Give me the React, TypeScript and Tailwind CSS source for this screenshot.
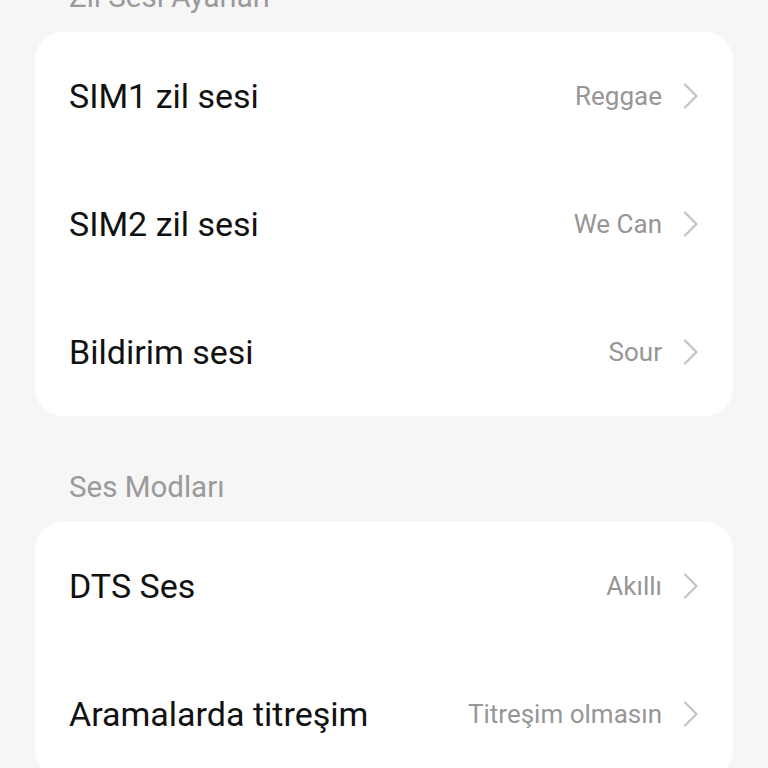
import React from 'react';

type Row = { title: string; value: string };

const ringRows: Row[] = [
  { title: 'SIM1 zil sesi', value: 'Reggae' },
  { title: 'SIM2 zil sesi', value: 'We Can' },
  { title: 'Bildirim sesi', value: 'Sour' },
];

const modeRows: Row[] = [
  { title: 'DTS Ses', value: 'Akıllı' },
  { title: 'Aramalarda titreşim', value: 'Titreşim olmasın' },
];

const Chevron: React.FC = () => (
  <svg width="16" height="26" viewBox="0 0 16 26" fill="none" className="shrink-0">
    <path d="M2 1.5 L13.5 13 L2 24.5" stroke="#c4c4c4" strokeWidth="2.2" strokeLinecap="round" strokeLinejoin="round" />
  </svg>
);

const SettingRow: React.FC<{ row: Row }> = ({ row }) => (
  <div className="flex h-[128px] items-center justify-between pl-[34px] pr-[34px]">
    <span className="text-[34px] leading-none text-[#111111]">{row.title}</span>
    <div className="flex items-center gap-[21px]">
      <span className="text-[26px] leading-none text-[#969696]">{row.value}</span>
      <Chevron />
    </div>
  </div>
);

const Card: React.FC<{ rows: Row[] }> = ({ rows }) => (
  <div className="overflow-hidden rounded-[28px] bg-white">
    {rows.map(row => (
      <SettingRow key={row.title} row={row} />
    ))}
  </div>
);

export default function App() {
  return (
    <div
      className="h-[768px] w-[768px] overflow-hidden bg-[#f6f6f6] px-[35px]"
      style={{ fontFamily: 'Roboto, "Noto Sans", sans-serif' }}
    >
      {/* Zil Sesi Ayarları - cut off at top */}
      <div className="-mt-[18px] pb-[20px] pl-[34px] text-[29.5px] leading-[30px] text-[#9a9a9a]">
        Zil Sesi Ayarları
      </div>
      <Card rows={ringRows} />

      <div className="pt-[56px] pb-[20px] pl-[34px] text-[29.5px] leading-[30px] text-[#9a9a9a]">
        Ses Modları
      </div>
      <Card rows={modeRows} />
    </div>
  );
}
